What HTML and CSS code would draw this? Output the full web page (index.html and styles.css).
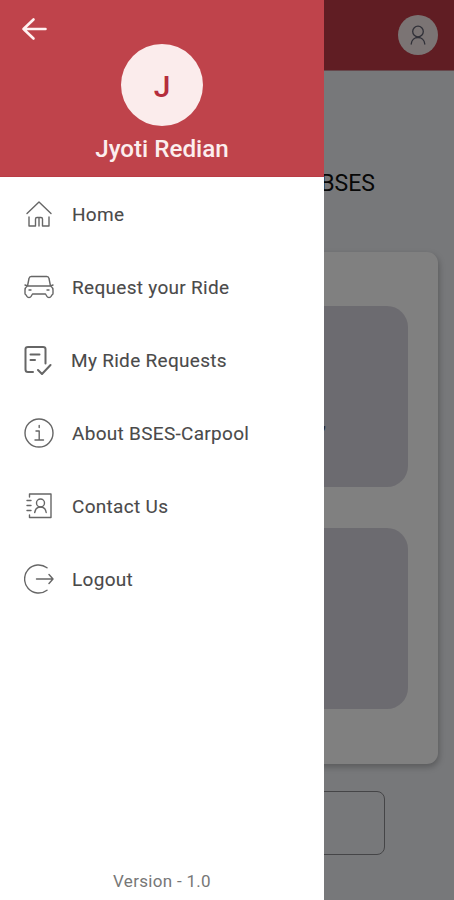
FILE: index.html
```html
<!DOCTYPE html>
<html lang="en">
<head>
<meta charset="utf-8">
<title>Carpool</title>
<link rel="stylesheet" href="styles.css">
</head>
<body>
<div class="screen">
  <main class="page">
    <header class="bar">
      <span class="profile">
        <svg width="16" height="20" viewBox="0 0 16 20"><circle cx="8" cy="6.500" r="5.300"/><path d="M1.200 19c.4-4 3.300-6.500 6.800-6.500s6.400 2.500 6.800 6.500"/></svg>
      </span>
    </header>
    <h1 class="heading">BSES</h1>
    <section class="card">
      <div class="tile"><span class="tile-text">,</span></div>
      <div class="tile"></div>
    </section>
    <div class="button"></div>
  </main>
  <aside class="drawer">
    <header class="user">
      <svg class="back" width="26" height="24" viewBox="0 0 26 24"><path d="M24.500 12H2.500M12.500 2.500L2.500 12l10 9.500"/></svg>
      <span class="avatar">J</span>
      <span class="name">Jyoti Redian</span>
    </header>
    <nav class="menu">
      <a class="item"><svg class="icon" viewBox="0 0 30 30"><path d="M3 14.500L15 3l12 11.500M5 18V27h6.500V20q0-1.500 1.500-1.500h4q1.500 0 1.500 1.500v7H25v-9M15 19v8"/></svg><span class="label">Home</span></a>
      <a class="item"><svg class="icon" viewBox="0 0 30 30"><path d="M3.500 14L5 6.500Q5.300 4.500 7.300 4.500h15.400q2 0 2.300 2L26.500 14M3.500 14h23M3.500 14L1 13M26.500 14L29 13M3.500 14Q1 15.500 1 18v3.500q0 1 1 1.300L3 24.500q.5 1 2 1t2-1L8.500 22h13l1.500 2.500q.5 1 2 1t2-1l1-1.700q1-.300 1-1.300V18q0-2.500-2.500-4M5 18h2M23 18h2"/></svg><span class="label">Request your Ride</span></a>
      <a class="item"><svg class="icon task" viewBox="0 0 30 30"><path d="M9 27H4q-2.500 0-2.500-2.500V4Q1.500 2 4 2h15Q21.500 2 21.500 4v14.500M6.500 9.500H15.500M6.500 15h4.500M14 25l4 4 8.500-9"/></svg><span class="label rides">My Ride Requests</span></a>
      <a class="item"><svg class="icon" viewBox="0 0 30 30"><circle cx="15" cy="15" r="14"/><path d="M15.200 7.500v2M12 13h3.200v9M11 22h8.500"/></svg><span class="label">About BSES-Carpool</span></a>
      <a class="item"><svg class="icon" viewBox="0 0 30 30"><path d="M5.500 6V3H27v23.500H5.500V24M3 9.500h4M3 14.500h4M3 19.500h4"/><circle cx="16.500" cy="12" r="4"/><path d="M10.700 21.500q1-5.500 5.800-5.500t5.700 5.500"/></svg><span class="label">Contact Us</span></a>
      <a class="item"><svg class="icon" viewBox="0 0 30 30"><path d="M23 3.800A14 14 0 1 0 23 26.200M12.500 15H29M25 10.500l4 4.500-4 4.500"/></svg><span class="label">Logout</span></a>
    </nav>
    <footer class="version">Version - 1.0</footer>
  </aside>
</div>
</body>
</html>
```
FILE: styles.css
```css
* { box-sizing: border-box; }
body { margin: 0; font-family: Roboto, "Liberation Sans", sans-serif; }
svg { fill: none; stroke-linecap: round; stroke-linejoin: round; }
.screen { position: relative; width: 454px; height: 900px; overflow: hidden; }
.page { height: 900px; background: #77787a; }
.bar { height: 71px; background: #601d23; display: flex; justify-content: flex-end; padding: 15px 16px; border-bottom: 1px solid #66484c; }
.profile { width: 40px; height: 40px; border-radius: 50%; background: #7b7474; display: flex; align-items: center; justify-content: center; }
.profile svg { stroke: #303038; stroke-width: 1.3; }
.heading { margin: 99px 79px 0 0; text-align: right; font-size: 23px; line-height: 28px; font-weight: 400; color: #080808; }
.card { margin: 54px 16px 0; height: 512px; padding: 54px 30px; display: flex; flex-direction: column; gap: 41px; background: #808080; border-radius: 11px; box-shadow: 1px 3px 6px rgba(0, 0, 0, .25); }
.tile { height: 181px; border-radius: 21px; background: #6c6b70; display: flex; justify-content: flex-end; padding: 103px 82px 0 0; }
.tile-text { font-size: 20px; line-height: 24px; color: #222; }
.button { margin: 27px 69px 0; height: 64px; border: 1.500px solid #454547; border-radius: 8px; }
.drawer { position: absolute; left: 0; top: 0; width: 324px; height: 900px; background: #fff; display: flex; flex-direction: column; }
.user { height: 177px; background: #bf434b; border-bottom: 1px solid #b93c45; display: flex; flex-direction: column; align-items: center; color: #fceeee; }
.back { align-self: flex-start; margin: 17px 0 0 21px; stroke: #fff2f2; stroke-width: 2.600; }
.avatar { width: 82px; height: 82px; margin-top: 3px; padding-top: 3px; border-radius: 50%; background: #fbecec; color: #b52d3c; font-size: 30px; font-weight: 500; display: flex; align-items: center; justify-content: center; }
.name { margin-top: 8px; font-size: 24.200px; line-height: 30px; font-weight: 500; }
.menu { padding-top: 1px; display: flex; flex-direction: column; }
.item { height: 73px; padding-left: 24px; display: flex; align-items: center; gap: 18px; color: #4a4a4a; }
.icon { width: 30px; height: 30px; margin-bottom: 2px; stroke: #666; stroke-width: 1.400; }
.task { stroke-width: 2; }
.label { font-size: 19px; line-height: 24px; font-weight: 400; letter-spacing: .3px; -webkit-text-stroke: .1px #4a4a4a; }
.rides { margin-left: -1px; }
.version { margin-top: auto; padding-bottom: 9px; text-align: center; font-size: 17px; line-height: 20px; letter-spacing: .3px; color: #777; }
```
